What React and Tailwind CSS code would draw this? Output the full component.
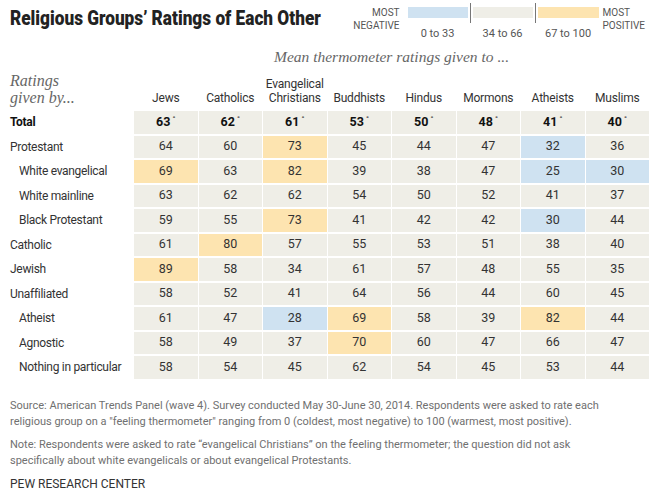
const columns = ["Jews", "Catholics", "Evangelical Christians", "Buddhists", "Hindus", "Mormons", "Atheists", "Muslims"];

const rows = [
    { label: "Total", bold: true, values: [63, 62, 61, 53, 50, 48, 41, 40] },
    { label: "Protestant", values: [64, 60, 73, 45, 44, 47, 32, 36] },
    { label: "White evangelical", indent: true, values: [69, 63, 82, 39, 38, 47, 25, 30] },
    { label: "White mainline", indent: true, values: [63, 62, 62, 54, 50, 52, 41, 37] },
    { label: "Black Protestant", indent: true, values: [59, 55, 73, 41, 42, 42, 30, 44] },
    { label: "Catholic", values: [61, 80, 57, 55, 53, 51, 38, 40] },
    { label: "Jewish", values: [89, 58, 34, 61, 57, 48, 55, 35] },
    { label: "Unaffiliated", values: [58, 52, 41, 64, 56, 44, 60, 45] },
    { label: "Atheist", indent: true, values: [61, 47, 28, 69, 58, 39, 82, 44] },
    { label: "Agnostic", indent: true, values: [58, 49, 37, 70, 60, 47, 66, 47] },
    { label: "Nothing in particular", indent: true, values: [58, 54, 45, 62, 54, 45, 53, 44] },
];

// Cell colour by range
const cellColor = (v) => {
    if (v <= 33) return "bg-[#cfe2f1]";
    if (v >= 67) return "bg-[#fde4b0]";
    return "bg-[#efeee7]";
};

const sans = "font-['Roboto','Liberation_Sans',sans-serif]";
const serif = "font-['Liberation_Serif','DejaVu_Serif',serif]";

export default function App() {
    return (
        <div className={`w-[655px] h-[494px] bg-white px-[10px] text-[#333] ${sans}`}>

            {/* Header */}
            <div className="flex justify-between items-start h-[40px]">
                <h1 className="w-[312px] shrink-0 mt-[6px] text-[21px] leading-[24px] font-black text-[#222] whitespace-nowrap scale-x-[0.82] origin-left">
                    Religious Groups’ Ratings of Each Other
                </h1>

                {/* Legend */}
                <div className="flex items-start mt-[3px] text-[11px] text-[#555] shrink-0">
                    <div className="text-right text-[10px] leading-[13px] mt-[3px] mr-[8px]">
                        MOST<br />NEGATIVE
                    </div>
                    <div className="flex flex-col items-center w-[60px]">
                        <div className="h-[11px] w-full mt-[4px] bg-[#cfe2f1]" />
                        <span className="mt-[10px] leading-[12px]">0 to 33</span>
                    </div>
                    <div className="w-[1px] h-[20px] bg-[#777] mx-[2px]" />
                    <div className="flex flex-col items-center w-[60px]">
                        <div className="h-[11px] w-full mt-[4px] bg-[#efeee7]" />
                        <span className="mt-[10px] leading-[12px]">34 to 66</span>
                    </div>
                    <div className="w-[1px] h-[20px] bg-[#777] mx-[2px]" />
                    <div className="flex flex-col items-center w-[61px]">
                        <div className="h-[11px] w-full mt-[4px] bg-[#fde4b0]" />
                        <span className="mt-[10px] leading-[12px]">67 to 100</span>
                    </div>
                    <div className="text-[10px] leading-[13px] mt-[3px] ml-[4px]">
                        MOST<br />POSITIVE
                    </div>
                </div>
            </div>

            {/* Subtitle */}
            <div className={`pl-[264px] mt-[8px] text-[15.5px] leading-[18px] italic text-[#666] ${serif}`}>
                Mean thermometer ratings given to ...
            </div>

            {/* Table */}
            <div className="grid grid-cols-[123px_repeat(8,1fr)] gap-x-[1px] gap-y-[2px] w-[639px] mt-[6px]">
                <div className={`italic text-[16px] leading-[17px] text-[#666] pb-[3px] ${serif}`}>
                    Ratings<br />given by...
                </div>
                {columns.map((col) => (
                    <div key={col} className="flex items-end justify-center text-center text-[12px] tracking-[-0.2px] leading-[14px] pb-[4px]">
                        {col === "Evangelical Christians" ? (
                            <span>Evangelical<br />Christians</span>
                        ) : col}
                    </div>
                ))}

                {rows.map((row) => (
                    <div key={row.label} className="contents">
                        <div className={`h-[22.5px] flex items-center text-[12px] tracking-[-0.3px] whitespace-nowrap ${row.indent ? "pl-[9px]" : ""} ${row.bold ? "font-bold text-[#111]" : ""}`}>
                            {row.label}
                        </div>
                        {row.values.map((v, i) => (
                            <div
                                key={i}
                                className={`h-[22.5px] flex items-center justify-center text-[12.5px] ${cellColor(v)} ${row.bold ? "font-bold text-[#111]" : ""}`}
                            >
                                {v}
                                {row.bold && <span className="text-[8px] font-normal ml-[2px] -mt-[6px]">°</span>}
                            </div>
                        ))}
                    </div>
                ))}
            </div>

            {/* Footer */}
            <div className="mt-[19px] text-[11px] leading-[16px] text-[#707070]">
                <p>
                    Source: American Trends Panel (wave 4). Survey conducted May 30-June 30, 2014. Respondents were asked to rate each<br />
                    religious group on a "feeling thermometer" ranging from 0 (coldest, most negative) to 100 (warmest, most positive).
                </p>
                <p className="mt-[7px]">
                    Note: Respondents were asked to rate “evangelical Christians” on the feeling thermometer; the question did not ask<br />
                    specifically about white evangelicals or about evangelical Protestants.
                </p>
                <p className="mt-[7px] text-[12px] text-[#333]">PEW RESEARCH CENTER</p>
            </div>
        </div>
    );
}
